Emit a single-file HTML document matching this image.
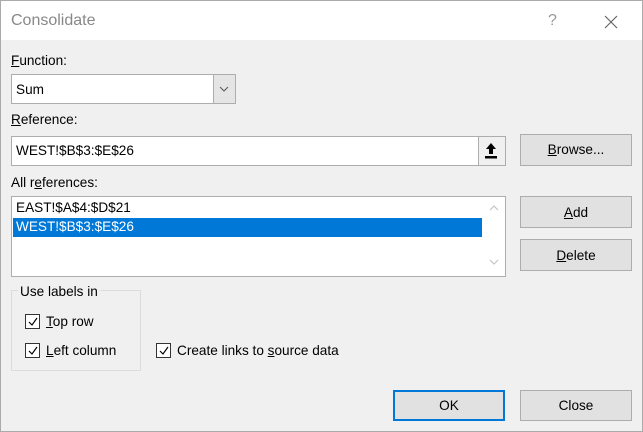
<!DOCTYPE html>
<html><head><style>
*{box-sizing:border-box;margin:0;padding:0}
body{width:643px;height:432px;overflow:hidden;background:#fff;font-family:"Liberation Sans",sans-serif;font-size:13.6px;color:#000;position:relative}
.a{position:absolute}
.t{position:absolute;white-space:nowrap;line-height:16px}
.btn{position:absolute;background:#e1e1e1;border:1px solid #adadad;text-align:center;line-height:28px}
.cb{position:absolute;width:15px;height:15px;border:1px solid #333;background:#fff}
.cb svg{position:absolute;left:1px;top:1px}
u{text-decoration:underline}
</style></head><body>
<div class="a" style="left:0;top:0;width:643px;height:432px;background:#fff;border:1px solid #aaa"></div>
<div class="a" style="left:1px;top:40px;width:641px;height:391px;background:#f0f0f0"></div>
<div class="t" style="left:11px;top:13px;font-size:16px;color:#888">Consolidate</div>
<div class="t" style="left:548px;top:13px;font-size:16px;color:#999">?</div>
<svg class="a" style="left:604px;top:15px" width="14" height="14"><path d="M1 1L13 13M13 1L1 13" stroke="#666" stroke-width="1.2"/></svg>

<div class="t" style="left:11px;top:53px"><u>F</u>unction:</div>
<div class="a" style="left:11px;top:74px;width:225px;height:30px;background:#fff;border:1px solid #adadad"></div>
<div class="a" style="left:213px;top:75px;width:22px;height:28px;background:#e5e5e5;border-left:1px solid #adadad"></div>
<svg class="a" style="left:219px;top:86px" width="10" height="6"><path d="M1 1L5 5L9 1" stroke="#555" fill="none"/></svg>
<div class="t" style="left:16px;top:82px">Sum</div>

<div class="t" style="left:11px;top:112px"><u>R</u>eference:</div>
<div class="a" style="left:11px;top:136px;width:495px;height:30px;background:#fff;border:1px solid #adadad"></div>
<div class="a" style="left:478px;top:137px;width:27px;height:28px;background:#f0f0f0;border-left:1px solid #adadad"></div>
<svg class="a" style="left:484px;top:142px" width="14" height="18"><path d="M7 1L2 7H5V12H9V7H12Z" fill="#000"/><rect x="1" y="14" width="12" height="2.5" fill="#000"/></svg>
<div class="t" style="left:16px;top:143px">WEST!$B$3:$E$26</div>
<div class="btn" style="left:520px;top:134px;width:112px;height:32px;line-height:30px"><u>B</u>rowse...</div>

<div class="t" style="left:11px;top:175px">All r<u>e</u>ferences:</div>
<div class="a" style="left:11px;top:196px;width:495px;height:81px;background:#fff;border:1px solid #adadad"></div>
<div class="t" style="left:16px;top:200px">EAST!$A$4:$D$21</div>
<div class="a" style="left:13px;top:218px;width:469px;height:19px;background:#0078d7"></div>
<div class="t" style="left:16px;top:219px;color:#fff">WEST!$B$3:$E$26</div>
<svg class="a" style="left:489px;top:205px" width="10" height="6"><path d="M1 5L5 1L9 5" stroke="#c0c0c0" fill="none"/></svg>
<svg class="a" style="left:489px;top:259px" width="10" height="6"><path d="M1 1L5 5L9 1" stroke="#c0c0c0" fill="none"/></svg>
<div class="btn" style="left:520px;top:196px;width:112px;height:32px;line-height:32px"><u>A</u>dd</div>
<div class="btn" style="left:520px;top:239px;width:112px;height:32px;line-height:32px"><u>D</u>elete</div>

<div class="a" style="left:11px;top:290px;width:130px;height:81px;border:1px solid #dcdcdc"></div>
<div class="t" style="left:18px;top:284px;background:#f0f0f0;padding:0 2px">Use labels in</div>
<div class="cb" style="left:25px;top:314px"><svg width="12" height="12"><path d="M2 6L5 9L10 2" stroke="#000" fill="none" stroke-width="1.2"/></svg></div>
<div class="t" style="left:46px;top:314px"><u>T</u>op row</div>
<div class="cb" style="left:25px;top:343px"><svg width="12" height="12"><path d="M2 6L5 9L10 2" stroke="#000" fill="none" stroke-width="1.2"/></svg></div>
<div class="t" style="left:46px;top:343px"><u>L</u>eft column</div>
<div class="cb" style="left:156px;top:343px"><svg width="12" height="12"><path d="M2 6L5 9L10 2" stroke="#000" fill="none" stroke-width="1.2"/></svg></div>
<div class="t" style="left:177px;top:343px">Create links to <u>s</u>ource data</div>

<div class="btn" style="left:393px;top:390px;width:112px;height:31px;border:2px solid #0078d7;line-height:27px">OK</div>
<div class="btn" style="left:520px;top:390px;width:112px;height:31px;line-height:29px">Close</div>
</body></html>
